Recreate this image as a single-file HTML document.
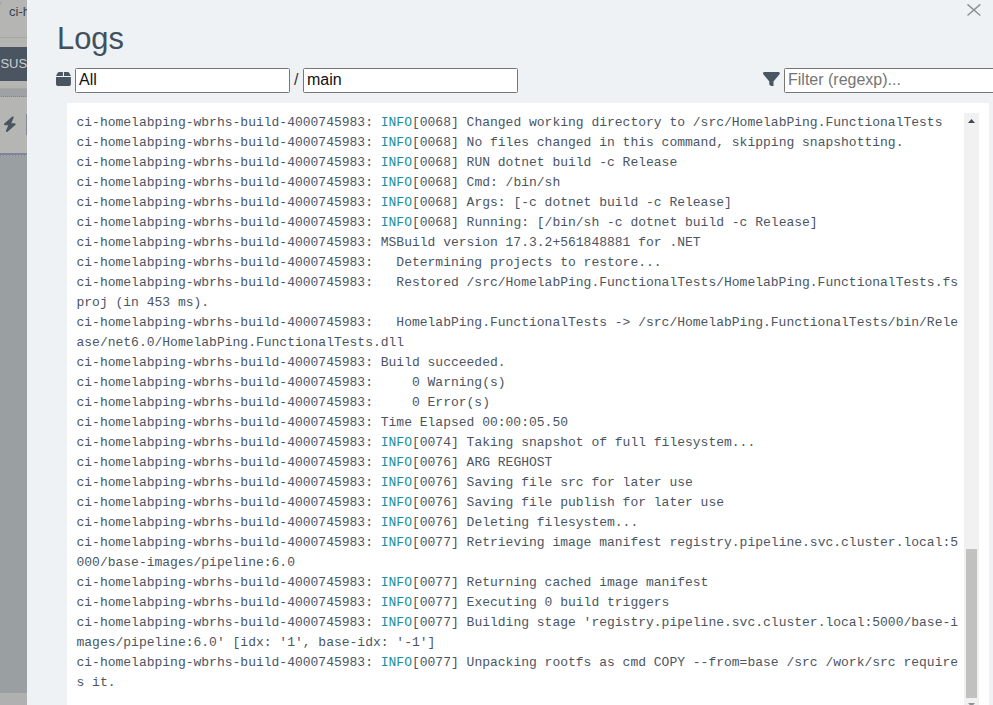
<!DOCTYPE html>
<html><head><meta charset="utf-8"><style>
html,body{margin:0;padding:0;width:993px;height:705px;overflow:hidden;background:#eef2f5;font-family:"Liberation Sans",sans-serif;}
.strip{position:absolute;left:0;top:0;width:27px;height:705px;background:#9a9fa2;overflow:hidden;}
.strip div{position:absolute;left:0;width:27px;}
.modal{position:absolute;left:27px;top:0;width:966px;height:705px;background:#eef2f5;}
h1{position:absolute;left:56.6px;top:20px;margin:0;font-weight:normal;font-size:32px;color:#424f5c;line-height:36px;transform:scaleX(0.965);transform-origin:0 0;}
.close{position:absolute;left:966px;top:3px;}
.boxic{position:absolute;left:56px;top:72px;}
input{position:absolute;font-family:"Liberation Sans",sans-serif;font-size:16px;box-sizing:border-box;height:25px;border:1px solid #767676;border-radius:1.5px;padding:0 3px 2px 3px;background:#fff;color:#111;outline:none;margin:0;}
.in1{left:75px;top:68px;width:215px;}
.in2{left:303px;top:68px;width:215px;}
.slash{position:absolute;left:294px;top:71px;font-size:16px;color:#333;line-height:18px;}
.filt{position:absolute;left:763.2px;top:71.8px;}
.in3{left:784px;top:68px;width:260px;}
input::placeholder{color:#757575;}
.log{position:absolute;left:67px;top:103px;width:922px;height:700px;background:#fff;}
pre{position:absolute;left:9.5px;top:10px;width:887px;margin:0;font-family:"Liberation Mono",monospace;font-size:13px;line-height:20px;color:#4b5561;white-space:pre-wrap;word-break:break-all;}
.i{color:#168f9e;}
.track{position:absolute;left:897px;top:10px;width:15px;height:700px;background:#f1f1f1;}
.thumb{position:absolute;left:2px;top:436px;width:11px;height:149px;background:#c1c2bf;}
.up{position:absolute;left:4px;top:6px;}
.dn{position:absolute;left:4px;top:590px;}

</style></head><body>
<div class="strip">
<div style="top:0;height:37px;background:#b5b5b3;"></div>
<div style="top:37px;height:1px;background:#a8a6a1;"></div>
<div style="top:38px;height:9px;background:#b5b5b3;"></div><div style="top:2px;left:0;width:1px;height:3px;background:#a2a6ac;"></div><div style="top:2px;left:1px;width:1px;height:1px;background:#a5a9ae;"></div>
<span style="position:absolute;left:9px;top:4px;font-size:13px;line-height:15px;color:#384350;white-space:nowrap;">ci-homelabping</span>
<div style="top:47px;height:34px;background:#4a5561;"></div>
<span style="position:absolute;left:0.4px;top:55.7px;font-size:13px;line-height:16px;color:#c9ced3;white-space:nowrap;">SUSPENDED</span>
<div style="top:81px;height:8px;background:#b5b5b3;"></div>
<div style="top:88px;height:1px;background:#aaa8a3;"></div><div style="top:89px;height:8px;background:#9ea2a5;"></div>
<div style="top:96px;height:1px;background:repeating-linear-gradient(90deg,transparent 0 1px,#7c82a0 1px 2px);"></div>
<div style="top:97px;height:56px;background:#b5b5b3;"></div>
<svg style="position:absolute;left:3px;top:115.6px" width="13.6" height="16.4" viewBox="0 0 448 512"><path d="M349.4 44.6c5.9-13.7 1.5-29.7-10.6-38.5s-28.6-8-39.9 1.8l-256 224c-10 8.8-13.6 22.9-8.9 35.3S50.7 288 64 288H175.5L98.6 467.4c-5.9 13.7-1.5 29.7 10.6 38.5s28.6 8 39.9-1.8l256-224c10-8.8 13.6-22.9 8.9-35.3s-16.6-20.7-30-20.7H272.5L349.4 44.6z" fill="#4a5561"/></svg>
<div style="left:26px;width:1px;top:113.5px;height:21px;background:#838a99;"></div>
<div style="top:153px;height:2px;background:#80869a;"></div>
<div style="top:155px;height:1px;background:repeating-linear-gradient(90deg,#7e8498 0 1px,#a5a9ac 1px 3px);"></div>
<div style="top:693px;height:12px;background:#afb0af;"></div>
</div>

<div class="modal"></div>
<h1>Logs</h1>
<svg class="close" width="16" height="14" viewBox="0 0 16 14"><path d="M1.5 1.4L14.3 12.5M14.3 1.4L1.5 12.5" stroke="#8d9093" stroke-width="1.4" fill="none"/></svg>
<svg class="boxic" width="14.9" height="14.1" viewBox="0 32 448 448" preserveAspectRatio="none"><path d="M50.7 58.5L0 160H208V32H93.7C75.8 32 59.5 42.1 51.5 58.1zM240 160H448L397.3 58.5C389.3 42.5 373 32 355.1 32H240V160zm208 32H0V416c0 35.3 28.7 64 64 64H384c35.3 0 64-28.7 64-64V192z" fill="#495561"/></svg>
<input class="in1" value="All">
<span class="slash">/</span>
<input class="in2" value="main">
<svg class="filt" width="16.8" height="14.7" viewBox="0 32 512 448"><path d="M3.9 54.9C10.5 40.9 24.5 32 40 32H472c15.5 0 29.5 8.9 36.1 22.9s4.6 30.5-5.2 42.5L320 320.9V448c0 12.1-6.8 23.2-17.7 28.6s-23.8 4.3-33.5-3l-64-48c-8.1-6-12.8-15.5-12.8-25.6V320.9L9 97.3C-.7 85.4-2.8 68.8 3.9 54.9z" fill="#495561"/></svg>
<input class="in3" placeholder="Filter (regexp)...">
<div class="log"><pre>ci-homelabping-wbrhs-build-4000745983: <span class="i">INFO</span>[0068] Changed working directory to /src/HomelabPing.FunctionalTests
ci-homelabping-wbrhs-build-4000745983: <span class="i">INFO</span>[0068] No files changed in this command, skipping snapshotting.
ci-homelabping-wbrhs-build-4000745983: <span class="i">INFO</span>[0068] RUN dotnet build -c Release
ci-homelabping-wbrhs-build-4000745983: <span class="i">INFO</span>[0068] Cmd: /bin/sh
ci-homelabping-wbrhs-build-4000745983: <span class="i">INFO</span>[0068] Args: [-c dotnet build -c Release]
ci-homelabping-wbrhs-build-4000745983: <span class="i">INFO</span>[0068] Running: [/bin/sh -c dotnet build -c Release]
ci-homelabping-wbrhs-build-4000745983: MSBuild version 17.3.2+561848881 for .NET
ci-homelabping-wbrhs-build-4000745983:   Determining projects to restore...
ci-homelabping-wbrhs-build-4000745983:   Restored /src/HomelabPing.FunctionalTests/HomelabPing.FunctionalTests.fsproj (in 453 ms).
ci-homelabping-wbrhs-build-4000745983:   HomelabPing.FunctionalTests -&gt; /src/HomelabPing.FunctionalTests/bin/Release/net6.0/HomelabPing.FunctionalTests.dll
ci-homelabping-wbrhs-build-4000745983: Build succeeded.
ci-homelabping-wbrhs-build-4000745983:     0 Warning(s)
ci-homelabping-wbrhs-build-4000745983:     0 Error(s)
ci-homelabping-wbrhs-build-4000745983: Time Elapsed 00:00:05.50
ci-homelabping-wbrhs-build-4000745983: <span class="i">INFO</span>[0074] Taking snapshot of full filesystem...
ci-homelabping-wbrhs-build-4000745983: <span class="i">INFO</span>[0076] ARG REGHOST
ci-homelabping-wbrhs-build-4000745983: <span class="i">INFO</span>[0076] Saving file src for later use
ci-homelabping-wbrhs-build-4000745983: <span class="i">INFO</span>[0076] Saving file publish for later use
ci-homelabping-wbrhs-build-4000745983: <span class="i">INFO</span>[0076] Deleting filesystem...
ci-homelabping-wbrhs-build-4000745983: <span class="i">INFO</span>[0077] Retrieving image manifest registry.pipeline.svc.cluster.local:5000/base-images/pipeline:6.0
ci-homelabping-wbrhs-build-4000745983: <span class="i">INFO</span>[0077] Returning cached image manifest
ci-homelabping-wbrhs-build-4000745983: <span class="i">INFO</span>[0077] Executing 0 build triggers
ci-homelabping-wbrhs-build-4000745983: <span class="i">INFO</span>[0077] Building stage 'registry.pipeline.svc.cluster.local:5000/base-images/pipeline:6.0' [idx: '1', base-idx: '-1']
ci-homelabping-wbrhs-build-4000745983: <span class="i">INFO</span>[0077] Unpacking rootfs as cmd COPY --from=base /src /work/src requires it.</pre>
<div class="track"><svg class="up" width="7" height="4" viewBox="0 0 7 4"><path d="M0 4L3.5 0L7 4z" fill="#3d4a56"/></svg><div class="thumb"></div><svg class="dn" width="7" height="4" viewBox="0 0 7 4"><path d="M0 0L3.5 4L7 0z" fill="#8f9396"/></svg></div>
</div>
</body></html>
